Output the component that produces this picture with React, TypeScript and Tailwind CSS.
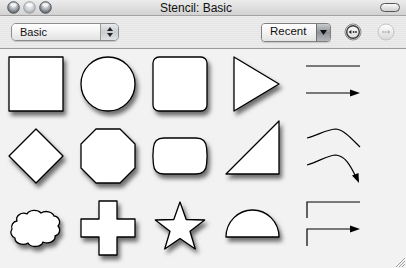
import React from "react";

const FONT = { fontFamily: '"Liberation Sans", Arial, sans-serif' };

// Shared drop shadow filter for the stencil shapes
function ShadowDefs() {
  return (
    <svg width="0" height="0" className="absolute">
      <defs>
        <filter id="shd" x="-30%" y="-30%" width="160%" height="160%">
          <feDropShadow dx="2.5" dy="4" stdDeviation="2" floodColor="#000" floodOpacity="0.55" />
        </filter>
        <radialGradient id="light" cx="50%" cy="35%" r="60%">
          <stop offset="0%" stopColor="#f4f6f8" />
          <stop offset="55%" stopColor="#a9afb5" />
          <stop offset="100%" stopColor="#5f666d" />
        </radialGradient>
        <radialGradient id="lightDim" cx="50%" cy="35%" r="60%">
          <stop offset="0%" stopColor="#f6f6f6" />
          <stop offset="60%" stopColor="#d0d3d6" />
          <stop offset="100%" stopColor="#a8acb0" />
        </radialGradient>
        <linearGradient id="nav" x1="0" y1="0" x2="0" y2="1">
          <stop offset="0%" stopColor="#ffffff" />
          <stop offset="100%" stopColor="#d8d8d8" />
        </linearGradient>
      </defs>
    </svg>
  );
}

function Cell({ children }: { children: React.ReactNode }) {
  return (
    <svg width="72" height="72" viewBox="0 0 72 72" className="overflow-visible">
      {children}
    </svg>
  );
}

const shape = { fill: "#fff", stroke: "#000", strokeWidth: 1.3, filter: "url(#shd)", strokeLinejoin: "round" as const };
const line = { fill: "none", stroke: "#000", strokeWidth: 1.2 };

function Arrow({ x, y }: { x: number; y: number }) {
  return <polygon points={`${x},${y} ${x - 10},${y - 3.5} ${x - 10},${y + 3.5}`} fill="#000" />;
}

function TrafficLight({ dim }: { dim?: boolean }) {
  return (
    <svg width="13" height="13" viewBox="0 0 13 13">
      <circle cx="6.5" cy="6.5" r="5.8" fill={dim ? "url(#lightDim)" : "url(#light)"} stroke={dim ? "#9a9ea2" : "#4d5257"} strokeWidth="0.9" />
      <ellipse cx="6.5" cy="3.8" rx="3.3" ry="1.8" fill="#fff" opacity="0.75" />
    </svg>
  );
}

function NavButton({ dir, dim }: { dir: "left" | "right"; dim?: boolean }) {
  const c = dim ? "#b0b0b0" : "#222";
  return (
    <svg width="18" height="18" viewBox="0 0 18 18">
      <circle cx="9" cy="9" r="8" fill="url(#nav)" stroke={dim ? "#c4c4c4" : "#8a8a8a"} strokeWidth="1" />
      {!dim && <circle cx="9" cy="9" r="6.3" fill="none" stroke="#3a3a3a" strokeWidth="1.4" />}
      {dir === "left" ? (
        <>
          <polygon points="4.6,9 7.4,7 7.4,11" fill={c} />
          <circle cx="9.6" cy="9" r="0.9" fill={c} />
          <circle cx="12" cy="9" r="0.9" fill={c} />
        </>
      ) : (
        <>
          <circle cx="6" cy="9" r="0.9" fill={c} />
          <circle cx="8.4" cy="9" r="0.9" fill={c} />
          <polygon points="13.4,9 10.6,7 10.6,11" fill={c} />
        </>
      )}
    </svg>
  );
}

export default function App() {
  return (
    <div className="relative w-[406px] h-[268px] overflow-hidden bg-[#f2f2f2]" style={FONT}>
      <ShadowDefs />

      {/* Title bar */}
      <div className="relative h-[16px] flex items-center border-b border-[#a3a3a3] bg-gradient-to-b from-[#ececec] to-[#d2d2d2]">
        <div className="flex items-center gap-[3px] pl-[7px]">
          <TrafficLight />
          <TrafficLight dim />
          <TrafficLight />
        </div>
        <div className="flex-1 text-center text-[12px] leading-none text-[#111] -ml-[40px]">Stencil: Basic</div>
        <div className="mr-[6px] w-[20px] h-[9px] rounded-full border border-[#555] bg-gradient-to-b from-[#fafafa] to-[#cfcfcf]" />
      </div>

      {/* Toolbar */}
      <div className="h-[33px] flex items-center border-b border-[#9c9c9c] bg-[repeating-linear-gradient(180deg,#ededed_0px,#ededed_1px,#e5e5e5_1px,#e5e5e5_2px)] pl-[11px] pr-[11px] text-[11px] text-[#111]">
        <div className="w-[108px] h-[18px] flex rounded-[5px] border border-[#8c8c8c] overflow-hidden shadow-[0_1px_1px_rgba(0,0,0,0.15)]">
          <div className="flex-1 flex items-center pl-[8px] bg-gradient-to-b from-[#ffffff] via-[#f2f2f2] to-[#e2e2e2]">Basic</div>
          <div className="w-[18px] flex flex-col items-center justify-center gap-[2px] border-l border-[#9a9a9a] bg-gradient-to-b from-[#e9eaec] via-[#c9ccd0] to-[#dfe1e3]">
            <svg width="6" height="4" viewBox="0 0 6 4"><polygon points="3,0 6,4 0,4" fill="#222" /></svg>
            <svg width="6" height="4" viewBox="0 0 6 4"><polygon points="0,0 6,0 3,4" fill="#222" /></svg>
          </div>
        </div>

        <div className="flex-1" />

        <div className="w-[70px] h-[19px] flex rounded-[4px] border border-[#7f7f7f] overflow-hidden shadow-[0_1px_1px_rgba(0,0,0,0.15)]">
          <div className="flex-1 flex items-center pl-[8px] text-[11.5px] bg-gradient-to-b from-[#ffffff] via-[#f3f3f3] to-[#e4e4e4]">Recent</div>
          <div className="w-[14px] flex items-center justify-center border-l border-[#6f6f6f] bg-gradient-to-b from-[#c9cbce] via-[#8f9397] to-[#b5b8bb]">
            <svg width="7" height="5" viewBox="0 0 7 5"><polygon points="0,0 7,0 3.5,5" fill="#111" /></svg>
          </div>
        </div>

        <div className="ml-[13px] flex items-center gap-[15px]">
          <NavButton dir="left" />
          <NavButton dir="right" dim />
        </div>
      </div>

      {/* Stencil shapes */}
      <div className="grid grid-cols-[72px_72px_72px_72px_1fr] grid-rows-[72px_72px_72px]">
        {/* Row 1 */}
        <Cell><rect x="9" y="8" width="54" height="54" {...shape} /></Cell>
        <Cell><circle cx="36" cy="35" r="27" {...shape} /></Cell>
        <Cell><rect x="9" y="8" width="54" height="54" rx="6" {...shape} /></Cell>
        <Cell><polygon points="18,8 63,35 18,62" {...shape} /></Cell>
        <Cell>
          <line x1="18" y1="17" x2="72" y2="17" {...line} />
          <line x1="18" y1="44" x2="64" y2="44" {...line} />
          <Arrow x={72} y={44} />
        </Cell>

        {/* Row 2 */}
        <Cell><polygon points="36,8 63,35 36,62 9,35" {...shape} /></Cell>
        <Cell><polygon points="24,8 48,8 63,23 63,47 48,62 24,62 9,47 9,23" {...shape} /></Cell>
        <Cell>
          <path
            d="M20 17 L52 17 Q62 17 62.6 27 Q63.6 35 62.6 43 Q62 53 52 53 L20 53 Q10 53 9.4 43 Q8.4 35 9.4 27 Q10 17 20 17 Z"
            {...shape}
          />
        </Cell>
        <Cell><polygon points="63,0 63,53 10,53" {...shape} /></Cell>
        <Cell>
          <path d="M19 17 C30 14 40 8 48 8 C56 9 63 17 72 26" {...line} />
          <path d="M19 44 C30 41 40 34 48 34 C57 35 62 44 67 54" {...line} />
          <polygon points="71,62 64,54.5 70.5,52" fill="#000" />
        </Cell>

        {/* Row 3 */}
        <Cell>
          <path
            d="M17 28 A7 6 0 0 1 27 21 A8 6 0 0 1 41 20 A8 6 0 0 1 54 23 A6 6 0 0 1 58 33 A6 6 0 0 1 55 43 A8 6 0 0 1 43 49 A8 6 0 0 1 28 50 A8 6 0 0 1 15 45 A6 6 0 0 1 12 36 A6 6 0 0 1 17 28 Z"
            {...shape}
          />
        </Cell>
        <Cell><path d="M27 8 H45 V26 H63 V44 H45 V62 H27 V44 H9 V26 H27 Z" {...shape} /></Cell>
        <Cell>
          <polygon
            points="36,9 42.2,26.5 60.7,27 46,38.2 51.3,56 36,45.5 20.7,56 26,38.2 11.3,27 29.8,26.5"
            {...shape}
          />
        </Cell>
        <Cell><path d="M10 44 A26.5 27 0 0 1 63 44 Z" {...shape} /></Cell>
        <Cell>
          <path d="M19 25 V9 H72" {...line} />
          <path d="M19 53 V36 H64" {...line} />
          <Arrow x={72} y={36} />
        </Cell>
      </div>

      {/* Resize grip */}
      <svg className="absolute right-[1px] bottom-[1px]" width="11" height="11" viewBox="0 0 11 11">
        <line x1="2" y1="11" x2="11" y2="2" stroke="#a0a0a0" strokeWidth="1" />
        <line x1="5" y1="11" x2="11" y2="5" stroke="#a0a0a0" strokeWidth="1" />
        <line x1="8" y1="11" x2="11" y2="8" stroke="#a0a0a0" strokeWidth="1" />
      </svg>
    </div>
  );
}
